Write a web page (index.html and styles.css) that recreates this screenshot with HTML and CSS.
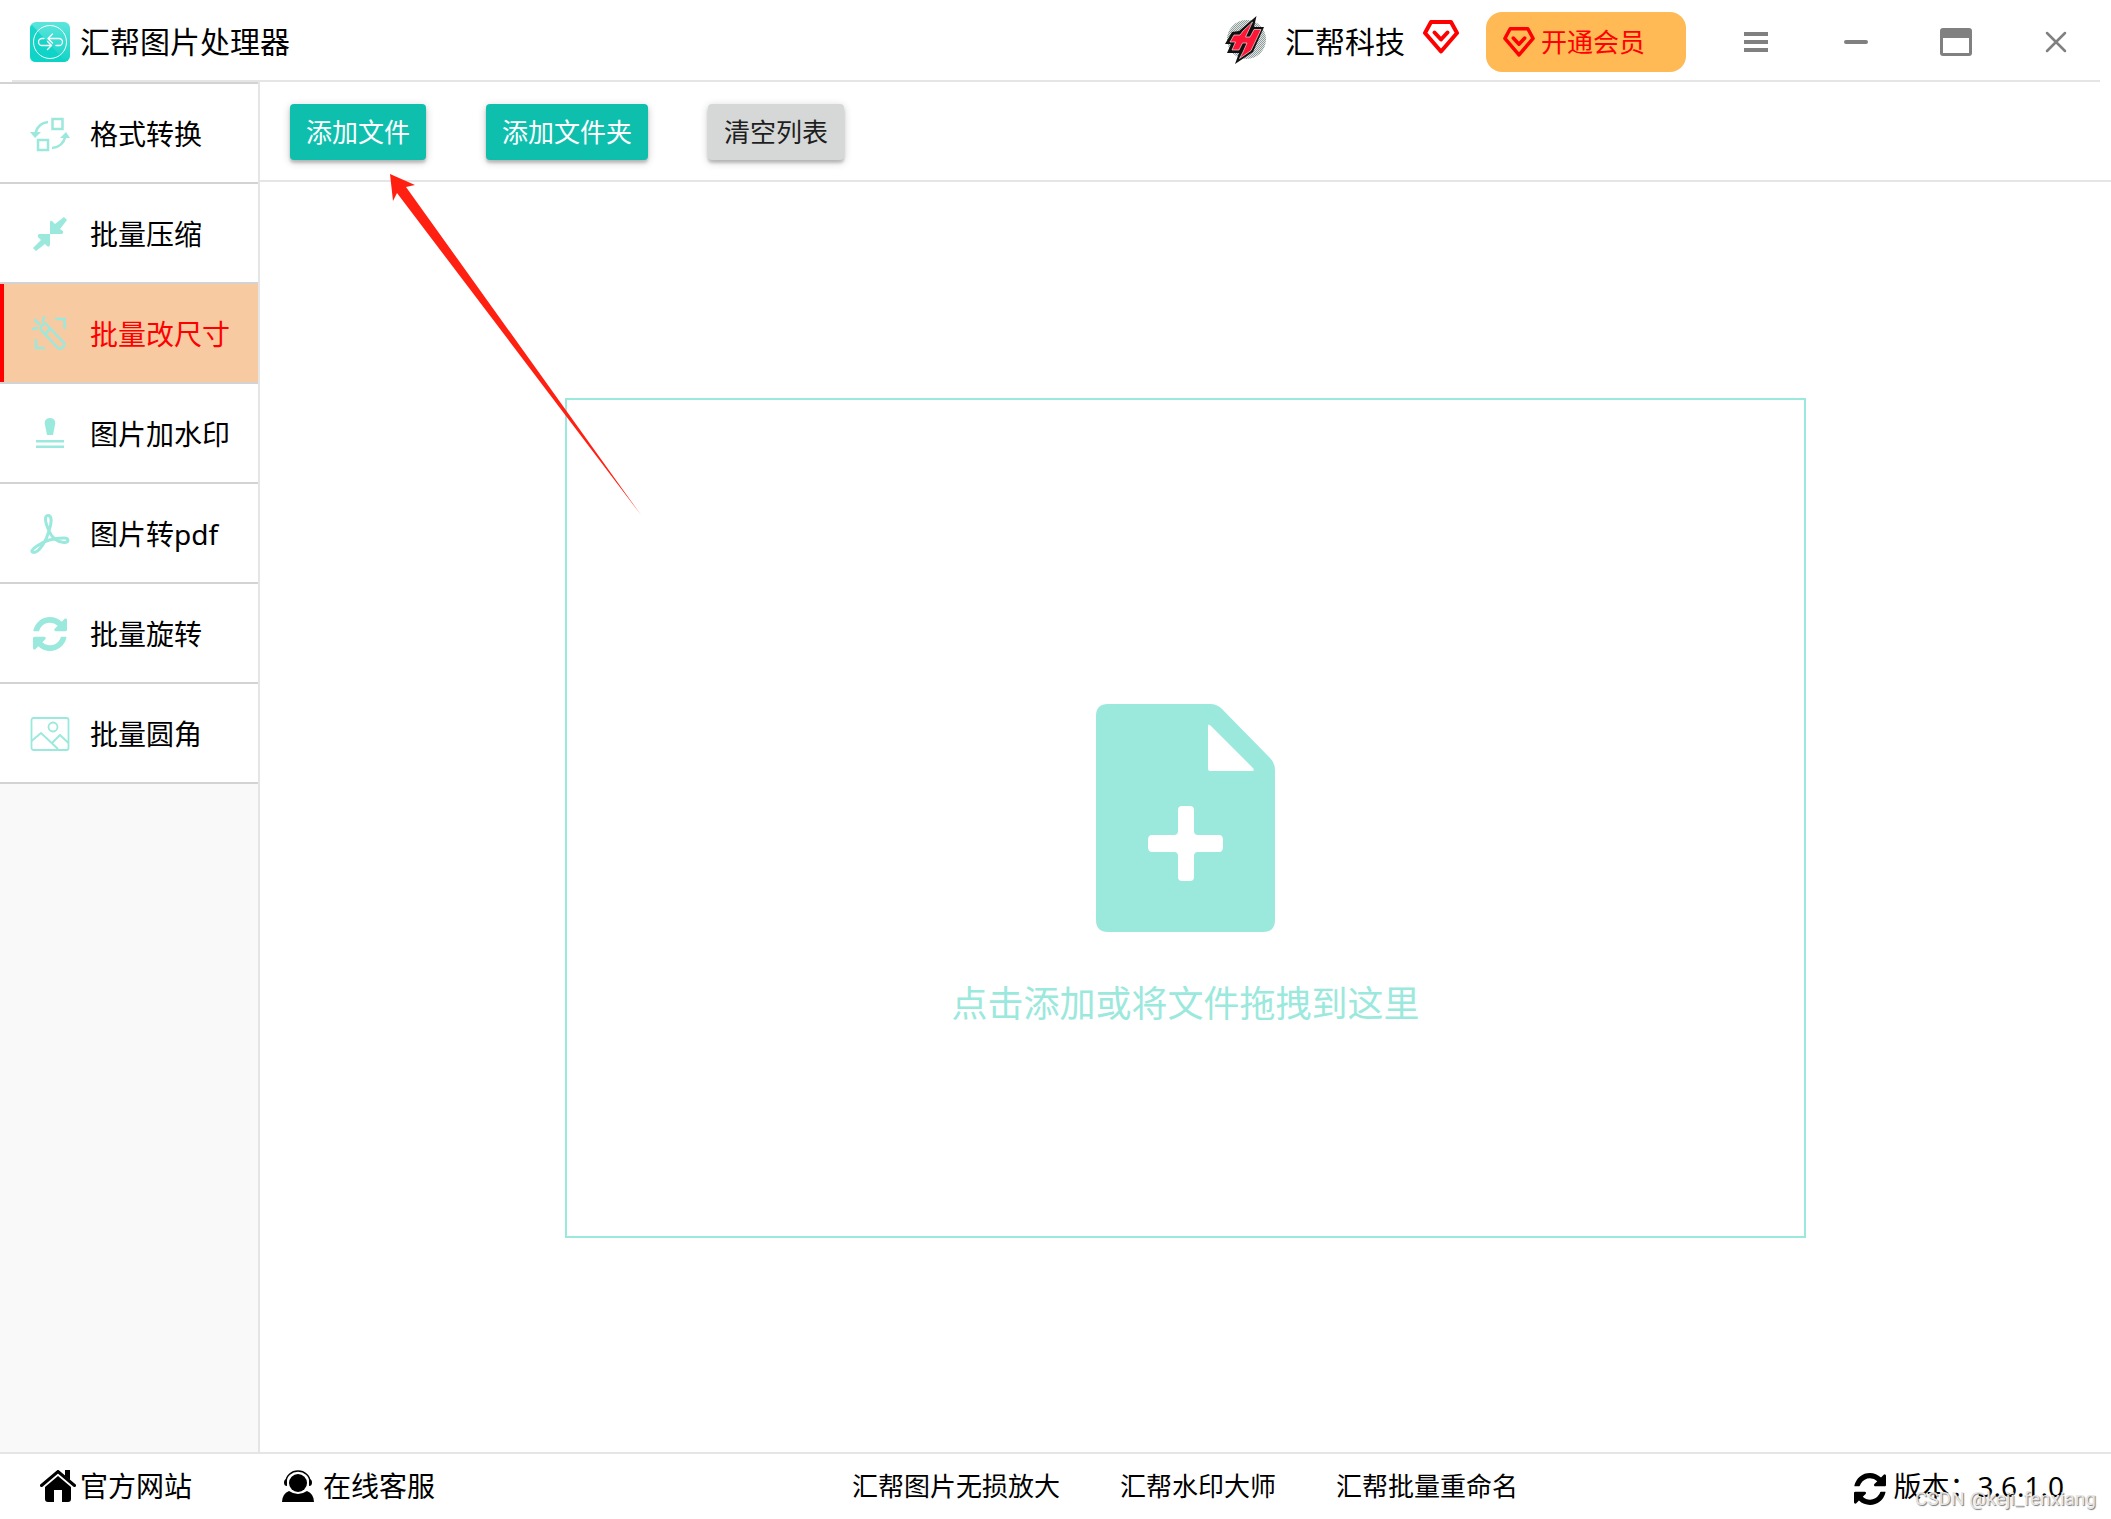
FILE: index.html
```html
<!DOCTYPE html>
<html lang="zh-CN">
<head>
<meta charset="utf-8">
<meta name="viewport" content="width=device-width, initial-scale=1">
<title>汇帮图片处理器</title>
<link rel="stylesheet" href="styles.css">
</head>
<body>
<svg class="sprite" aria-hidden="true">
  <symbol id="gem" viewBox="0 0 36 34">
    <path d="M8 2H28L34 13 18 31.500 2 13Z" fill="none" stroke="currentColor" stroke-width="4" stroke-linejoin="round"/>
    <path d="M11.500 12.500 18 19.500 24.500 12.500" fill="none" stroke="currentColor" stroke-width="4" stroke-linecap="round" stroke-linejoin="round"/>
  </symbol>
  <symbol id="refresh" viewBox="0 128 1536 1536">
    <path fill="currentColor" d="M1511 1056q0 5-1 7-64 268-268 434.500t-478 166.500q-146 0-282.500-55t-243.500-157l-129 129q-19 19-45 19t-45-19-19-45v-448q0-26 19-45t45-19h448q26 0 45 19t19 45-19 45l-137 137q71 66 161 102t187 36q134 0 250-65t186-179q11-17 53-117 8-23 30-23h192q13 0 22.500 9.500t9.500 22.500zm25-800v448q0 26-19 45t-45 19h-448q-26 0-45-19t-19-45 19-45l138-138q-148-137-349-137-134 0-250 65t-186 179q-11 17-53 117-8 23-30 23h-199q-13 0-22.500-9.500t-9.500-22.500v-7q65-268 270-434.500t480-166.500q146 0 284 55.500t245 156.500l130-129q19-19 45-19t45 19 19 45z"/>
  </symbol>
</svg>
<div class="app">
  <header class="titlebar">
    <div class="brand">
      <svg class="brand-logo" viewBox="0 0 40 40" aria-hidden="true">
        <defs><linearGradient id="lg" x1="0" y1="0" x2="0" y2="1"><stop offset="0" stop-color="#5ce5dc"/><stop offset="1" stop-color="#12d3c6"/></linearGradient></defs>
        <rect width="40" height="40" rx="6" fill="url(#lg)"/>
        <path d="M0 6V34Q0 40 6 40H36L2 3Q0 4 0 6Z" fill="#0ad3c5" opacity=".8"/>
        <circle cx="20" cy="20" r="16.500" fill="none" stroke="#fff" stroke-width="1"/>
        <g fill="none" stroke="#fff" stroke-width="1.300" stroke-linecap="round" stroke-linejoin="round">
          <path d="M14 16.500H12A3.500 3.500 0 0 0 12 23.500H21.500M17.500 19.500 21.500 23.500 17.500 27.500"/>
          <path d="M26 23.500H29A3.500 3.500 0 0 0 29 16.500H18M22.500 12 18 16.500 22.500 21"/>
        </g>
      </svg>
      <h1 class="brand-name">汇帮图片处理器</h1>
    </div>
    <div class="account">
      <svg class="avatar" viewBox="0 0 42 50" aria-hidden="true">
        <defs><pattern id="dots" width="2" height="2" patternUnits="userSpaceOnUse"><rect width="2" height="2" fill="#dfe5e3"/><rect width="1" height="1" fill="#8f9c99"/><rect x="1" y="1" width="1" height="1" fill="#8f9c99"/></pattern></defs>
        <circle cx="21.500" cy="24.500" r="19.500" fill="url(#dots)"/>
        <path d="M31.500 1 29 12H39L28 37 10 49 14 38H2L6 29H0L7 17 14 16Z" fill="#111"/>
        <path d="M27.500 7 18 16 15 20H9L5 27H10.500L7 35H14L17.500 28H22L18 37 14.500 43.500 26 35.500 36 14.500H29L25 22H20.500Z" fill="#ff1535" stroke="#fff" stroke-width=".6"/>
      </svg>
      <span class="account-name">汇帮科技</span>
      <svg class="account-gem" aria-hidden="true"><use href="#gem"/></svg>
      <button class="vip" type="button"><svg class="vip-gem" aria-hidden="true"><use href="#gem"/></svg>开通会员</button>
    </div>
    <div class="window-controls">
      <button type="button" aria-label="菜单"><svg viewBox="0 0 32 32"><path d="M4 8H28M4 16H28M4 24H28" stroke="currentColor" stroke-width="4"/></svg></button>
      <button type="button" aria-label="最小化"><svg viewBox="0 0 32 32"><path d="M6 16H26" stroke="currentColor" stroke-width="4" stroke-linecap="round"/></svg></button>
      <button type="button" aria-label="最大化"><svg viewBox="0 0 32 32"><path fill="currentColor" fill-rule="evenodd" d="M3 2H29Q32 2 32 5V27Q32 30 29 30H3Q0 30 0 27V5Q0 2 3 2ZM3 12V27H29V12Z"/></svg></button>
      <button type="button" aria-label="关闭"><svg viewBox="0 0 32 32"><path d="M7 7 25 25M25 7 7 25" stroke="currentColor" stroke-width="2.500" stroke-linecap="round"/></svg></button>
    </div>
  </header>

  <div class="workspace">
    <nav class="sidebar">
      <ul class="nav">
        <li><button class="nav-item" type="button"><svg viewBox="0 0 40 40"><g fill="none" stroke="currentColor" stroke-width="2.500"><rect x="22.500" y="5" width="10" height="10"/><rect x="8" y="26" width="10" height="10"/><path d="M18 8Q8 9 5.500 19M22 34Q33 33 35.500 22"/></g><path fill="currentColor" d="M0 18H11L5 24ZM30 24H40L36 18Z"/></svg>格式转换</button></li>
        <li><button class="nav-item" type="button"><svg viewBox="0 0 40 40"><path fill="currentColor" d="M20 19V8Q20.500 6 22 7L25 10 34 3 37 6 30 15 33 17Q34 19 32 20H20ZM20 20V31Q19 34 17 32L15 30 6 37 3 34 11 26 8 23Q7 21 9 20Z"/></svg>批量压缩</button></li>
        <li><button class="nav-item active" type="button" aria-current="page"><svg viewBox="0 0 40 40"><g fill="none" stroke="currentColor" stroke-width="2.500"><path d="M25 5H34.500V15M6 25V34H15"/><path d="M16 10 34 29Q35 31 34 32L31 34.500Q29 35 28 34L11 16Q10 14 11 13L13 10Q15 9 16 10ZM20 15 15 20"/><path d="M3 15 7 14M5 6 9 10M14 3 13 7" stroke-linecap="round"/></g></svg>批量改尺寸</button></li>
        <li><button class="nav-item" type="button"><svg viewBox="0 0 40 40"><path fill="currentColor" d="M20 4C16 4 14 7 15 11L17 21H23L25 11C26 7 24 4 20 4ZM6 26H34V28.500H6ZM6 31.500H34V34H6Z"/></svg>图片加水印</button></li>
        <li><button class="nav-item" type="button"><svg viewBox="0 0 40 40"><path fill="none" stroke="currentColor" stroke-width="3" stroke-linejoin="round" d="M18 1.500C14 1.500 15 8 19 17 22 24 28 29 35 28.500 39 28 39 24 34 24 25 24 14 27 7 32 2 35 0 38.500 4 38.500 9 38 16 28 19 17 22 8 22 1.500 18 1.500Z"/></svg>图片转pdf</button></li>
        <li><button class="nav-item" type="button"><svg viewBox="-3 -3 40 40"><use href="#refresh" width="34" height="34"/></svg>批量旋转</button></li>
        <li><button class="nav-item" type="button"><svg viewBox="0 0 40 40"><g fill="none" stroke="currentColor" stroke-width="1.800" stroke-linejoin="round"><rect x="1.500" y="4" width="37" height="32" rx="2"/><circle cx="23" cy="13" r="4.500"/><path d="M1.500 27 11 19 28 35M22 29 30 21 38.500 29"/></g></svg>批量圆角</button></li>
      </ul>
    </nav>

    <main class="content">
      <div class="toolbar">
        <button class="btn primary" type="button">添加文件</button>
        <button class="btn primary" type="button">添加文件夹</button>
        <button class="btn" type="button">清空列表</button>
      </div>
      <div class="stage">
        <button class="dropzone" type="button">
          <svg class="file-icon" viewBox="0 0 180 228" aria-hidden="true">
            <path fill="currentColor" fill-rule="evenodd" d="M12 0H114Q121 0 126 5L174 54Q179 59 179 66V216Q179 228 167 228H12Q0 228 0 216V12Q0 0 12 0ZM112 22V65Q112 67 114 67H156Q159 67 157 64L115 22Q112 19 112 22ZM86 102Q82 102 82 106V127Q82 131 78 131H56Q52 131 52 136V143Q52 148 56 148H78Q82 148 82 152V173Q82 177 86 177H94Q98 177 98 173V152Q98 148 102 148H123Q127 148 127 143V136Q127 131 123 131H102Q98 131 98 127V106Q98 102 94 102Z"/>
          </svg>
          <span>点击添加或将文件拖拽到这里</span>
        </button>
      </div>
    </main>
  </div>

  <footer class="statusbar">
    <div class="support">
      <a class="site" href="#site"><svg viewBox="0 0 36 32" aria-hidden="true"><path d="M1.500 15.500 18 1.500 34.500 15.500" fill="none" stroke="currentColor" stroke-width="3" stroke-linecap="round"/><path fill="currentColor" d="M25 0H30V10L25 6ZM18 6 31 17V29Q31 32 28 32H22V20H14V32H8Q5 32 5 29V17Z"/></svg>官方网站</a>
      <a class="service" href="#service"><svg viewBox="0 0 32 32" aria-hidden="true"><circle cx="16" cy="13" r="9" fill="currentColor"/><path d="M4 12A12 11 0 0 1 28 12" fill="none" stroke="currentColor" stroke-width="1.500"/><path fill="currentColor" d="M5 9V16Q2 16 2 12.500T5 9ZM27 9V16Q30 16 30 12.500T27 9ZM0 32Q0 24 7 21 16 27 25 21 32 24 32 32Z"/></svg>在线客服</a>
    </div>
    <div class="products">
      <a href="#enlarge">汇帮图片无损放大</a>
      <a href="#watermark">汇帮水印大师</a>
      <a href="#rename">汇帮批量重命名</a>
    </div>
    <div class="version"><svg aria-hidden="true"><use href="#refresh"/></svg>版本：3.6.1.0</div>
    <span class="watermark">CSDN @keji_fenxiang</span>
  </footer>

  <svg class="pointer" viewBox="0 0 252 342" aria-hidden="true"><path fill="#ff2011" d="M0 0 25 11 16 13 251 341 7 19 3 27Z"/></svg>
</div>
</body>
</html>
```
FILE: styles.css
```css
* { box-sizing: border-box; }

body {
  margin: 0;
  background: #fff;
  color: #000;
  font-family: "Noto Sans", "Noto Sans CJK SC", sans-serif;
  font-size: 28px;
  line-height: 40px;
}

button {
  margin: 0;
  padding: 0;
  border: 0;
  background: none;
  color: inherit;
  font: inherit;
  cursor: pointer;
}

a { color: inherit; text-decoration: none; }
svg { display: block; flex: none; }
.sprite { position: absolute; width: 0; height: 0; }

.app {
  position: relative;
  display: flex;
  flex-direction: column;
  min-height: 100vh;
  white-space: nowrap;
}

/* Title bar */
.titlebar {
  display: flex;
  align-items: center;
  height: 82px;
  margin: 0 11px 0 12px;
  padding: 4px 4px 0 18px;
  border-bottom: 2px solid #e5e5e5;
}

.brand { display: flex; align-items: center; gap: 10px; }
.brand-logo { width: 40px; height: 40px; }
.brand-name { margin: 0; font-size: 30px; font-weight: 400; }

.account {
  display: flex;
  align-items: center;
  margin-left: auto;
}
.avatar { width: 42px; height: 50px; margin: 0 18px 4px 0; }
.account-name { font-size: 30px; }
.account-gem { width: 36px; height: 34px; margin: 0 27px 10px 18px; color: #f00; }

.vip {
  display: flex;
  align-items: center;
  gap: 6px;
  width: 200px;
  height: 60px;
  padding-left: 17px;
  border-radius: 16px;
  background: #ffb955;
  color: #f00;
  font-size: 26px;
}
.vip-gem { width: 32px; height: 30px; }

.window-controls {
  display: flex;
  gap: 20px;
  margin-left: 30px;
  color: #808080;
}
.window-controls button { display: grid; place-items: center; width: 80px; height: 60px; }
.window-controls svg { width: 32px; height: 32px; }

/* Sidebar and content */
.workspace { display: flex; flex: 1; }

.sidebar {
  flex: none;
  width: 260px;
  border-right: 2px solid #e5e5e5;
  background: #f9f9f9;
}
.nav {
  margin: 0;
  padding: 0;
  border-top: 2px solid #d3d3d3;
  list-style: none;
}
.nav-item {
  display: flex;
  align-items: center;
  gap: 20px;
  width: 100%;
  height: 100px;
  padding: 2px 0 0 30px;
  border-bottom: 2px solid #d3d3d3;
  background: #fff;
}
.nav-item svg { width: 40px; height: 40px; color: #9be8dd; }
.nav-item.active {
  background: #f7caa2;
  box-shadow: inset 4px 0 #f00;
  color: #f00;
}

.content { display: flex; flex: 1; flex-direction: column; min-width: 0; }

.toolbar {
  display: flex;
  align-items: center;
  gap: 60px;
  height: 100px;
  padding: 2px 0 0 30px;
  border-bottom: 2px solid #e5e5e5;
}
.btn {
  height: 56px;
  padding: 0 16px;
  border-radius: 4px;
  background: #d6d8d7;
  box-shadow: 0 2px 8px rgba(0, 0, 0, .2), 0 3px 3px rgba(0, 0, 0, .18);
  color: #1f1f1f;
  font-size: 26px;
}
.btn.primary { background: #0fbfad; color: #fff; }

.stage { display: flex; flex: 1; justify-content: center; padding: 216px 0 214px; }
.dropzone {
  display: flex;
  flex-direction: column;
  align-items: center;
  justify-content: center;
  gap: 52px;
  width: 67%;
  min-height: 480px;
  padding-top: 92px;
  border: 2px solid #9be8dd;
  color: #9be8dd;
  font-size: 36px;
}
.file-icon { width: 180px; height: 228px; }

/* Status bar */
.statusbar {
  position: relative;
  display: grid;
  grid-template-columns: 1fr auto 1fr;
  align-items: center;
  height: 67px;
  padding: 0 47px 2px 40px;
  border-top: 2px solid #e5e5e5;
}
.support { display: flex; gap: 90px; width: 0; }
.support a { display: flex; align-items: center; }
.site { gap: 4px; }
.service { gap: 9px; }
.site svg { width: 36px; height: 32px; }
.service svg { width: 32px; height: 32px; }
/* centred under the content column, right of the sidebar */
.products { display: flex; gap: 60px; padding-left: 266px; font-size: 26px; }
.version { display: flex; align-items: center; gap: 7px; justify-self: end; }
.version svg { width: 32px; height: 32px; margin-top: 6px; }

.watermark {
  position: absolute;
  right: 15px;
  bottom: 8px;
  color: #e6e6e6;
  font-family: Roboto, sans-serif;
  font-size: 19px;
  line-height: 24px;
  text-shadow: 1px 1px 1px #777;
}

/* Red arrow over the add-file button */
.pointer {
  position: absolute;
  top: 174px;
  left: 390px;
  width: 252px;
  height: 342px;
  pointer-events: none;
}
```
